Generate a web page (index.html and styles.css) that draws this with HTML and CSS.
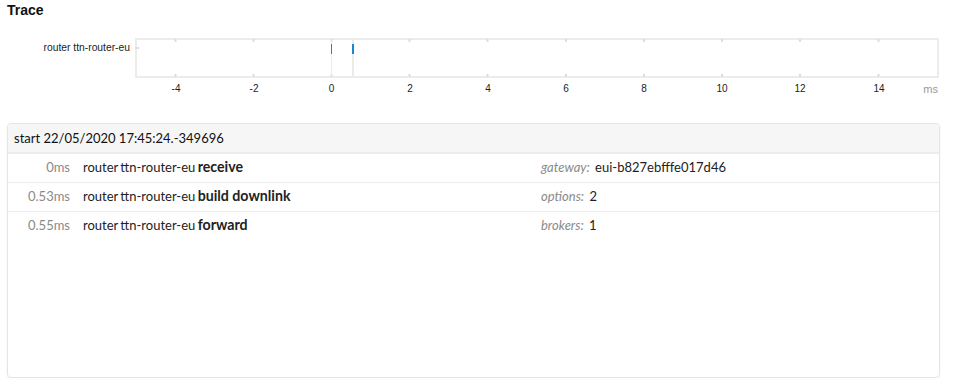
FILE: index.html
```html
<!DOCTYPE html>
<html lang="en">
<head>
    <meta charset="UTF-8">
    <meta name="viewport" content="width=device-width, initial-scale=1.0">
    <title>Trace</title>
    <link rel="stylesheet" href="styles.css">
</head>
<body>

    <h2 class="title">Trace</h2>

    <!-- timeline: 0ms at x=331, 39.1px per ms -->
    <svg class="chart" width="955" height="98" viewBox="0 18 955 98">
        <text class="row-label" x="130" y="51" text-anchor="end">router ttn-router-eu</text>

        <rect x="136" y="39" width="802" height="38" fill="#fff" stroke="#ececec" stroke-width="2" />
        <line x1="135" y1="48" x2="139" y2="48" stroke="#ddd" stroke-width="2" />

        <g class="ticks" stroke="#dcdcdc" stroke-width="2">
            <line x1="175.5" y1="39" x2="175.5" y2="42" /><line x1="175.5" y1="74" x2="175.5" y2="77" />
            <line x1="253.5" y1="39" x2="253.5" y2="42" /><line x1="253.5" y1="74" x2="253.5" y2="77" />
            <line x1="331.5" y1="39" x2="331.5" y2="42" /><line x1="331.5" y1="74" x2="331.5" y2="77" />
            <line x1="409.5" y1="39" x2="409.5" y2="42" /><line x1="409.5" y1="74" x2="409.5" y2="77" />
            <line x1="487.5" y1="39" x2="487.5" y2="42" /><line x1="487.5" y1="74" x2="487.5" y2="77" />
            <line x1="566" y1="39" x2="566" y2="42" /><line x1="566" y1="74" x2="566" y2="77" />
            <line x1="644" y1="39" x2="644" y2="42" /><line x1="644" y1="74" x2="644" y2="77" />
            <line x1="722" y1="39" x2="722" y2="42" /><line x1="722" y1="74" x2="722" y2="77" />
            <line x1="800" y1="39" x2="800" y2="42" /><line x1="800" y1="74" x2="800" y2="77" />
            <line x1="878.5" y1="39" x2="878.5" y2="42" /><line x1="878.5" y1="74" x2="878.5" y2="77" />
        </g>

        <!-- events -->
        <line x1="331.5" y1="40" x2="331.5" y2="76" stroke="#ebebeb" stroke-width="1" />
        <line x1="331.5" y1="44" x2="331.5" y2="54" stroke="#1a86cf" stroke-width="1" />
        <rect x="352" y="40" width="2" height="36" fill="#ebebeb" />
        <rect x="352" y="44" width="2" height="10" fill="#1a86cf" />

        <g class="axis" text-anchor="middle">
            <text x="176" y="92">-4</text>
            <text x="254" y="92">-2</text>
            <text x="331.5" y="92">0</text>
            <text x="410" y="92">2</text>
            <text x="488" y="92">4</text>
            <text x="566" y="92">6</text>
            <text x="644" y="92">8</text>
            <text x="722" y="92">10</text>
            <text x="800" y="92">12</text>
            <text x="879" y="92">14</text>
        </g>
        <text class="unit" x="938" y="93" text-anchor="end">ms</text>
    </svg>

    <div class="panel">
        <div class="panel-header">start 22/05/2020 17:45:24.-349696</div>

        <div class="event">
            <span class="event-time">0ms</span>
            <span class="event-name">router ttn-router-eu <strong>receive</strong></span>
            <span class="event-data"><em>gateway:</em> eui-b827ebfffe017d46</span>
        </div>
        <div class="event">
            <span class="event-time">0.53ms</span>
            <span class="event-name">router ttn-router-eu <strong>build downlink</strong></span>
            <span class="event-data"><em>options:</em> 2</span>
        </div>
        <div class="event">
            <span class="event-time">0.55ms</span>
            <span class="event-name">router ttn-router-eu <strong>forward</strong></span>
            <span class="event-data"><em>brokers:</em> 1</span>
        </div>
    </div>

</body>
</html>
```

FILE: styles.css
```css
body {
    margin: 0;
    padding: 0;
    font-family: "Liberation Sans", Arial, sans-serif;
    background-color: #fff;
    color: #222;
}

.title {
    margin: 0;
    padding: 2px 7px 0;
    font-size: 14px;
    line-height: 16px;
    font-weight: bold;
    color: #111;
}

.chart {
    display: block;
}

.chart text {
    font-family: "Liberation Sans", Arial, sans-serif;
}

.row-label {
    font-size: 10.3px;
    fill: #222;
}

.axis text {
    font-size: 10px;
    fill: #222;
}

.unit {
    font-size: 11px;
    fill: #999;
}

.panel {
    margin: 7px 15px 0 7px;
    height: 255px;
    box-sizing: border-box;
    border: 1px solid #e4e4e4;
    border-radius: 4px;
    box-shadow: 0 1px 2px rgba(0, 0, 0, 0.06);
    font-family: Lato, "Noto Sans", sans-serif;
    font-size: 13px;
    overflow: hidden;
}

.panel-header {
    background-color: #f6f6f6;
    border-bottom: 2px solid #ececec;
    padding: 6px 6px;
    line-height: 16px;
    color: #111;
}

.event {
    display: grid;
    grid-template-columns: 62px 445px 1fr;
    column-gap: 13px;
    padding: 5px 0 7px;
    line-height: 16px;
    border-bottom: 1px solid #ececec;
}

.event:last-child {
    border-bottom: none;
}

.event-time {
    text-align: right;
    color: #8a8a8a;
}

.event-name {
    word-spacing: -1px;
}

.event-name strong {
    font-size: 14.2px;
    font-weight: bold;
    word-spacing: 0;
}

.event-data em {
    color: #8a8a8a;
    margin-right: 2px;
}
```
